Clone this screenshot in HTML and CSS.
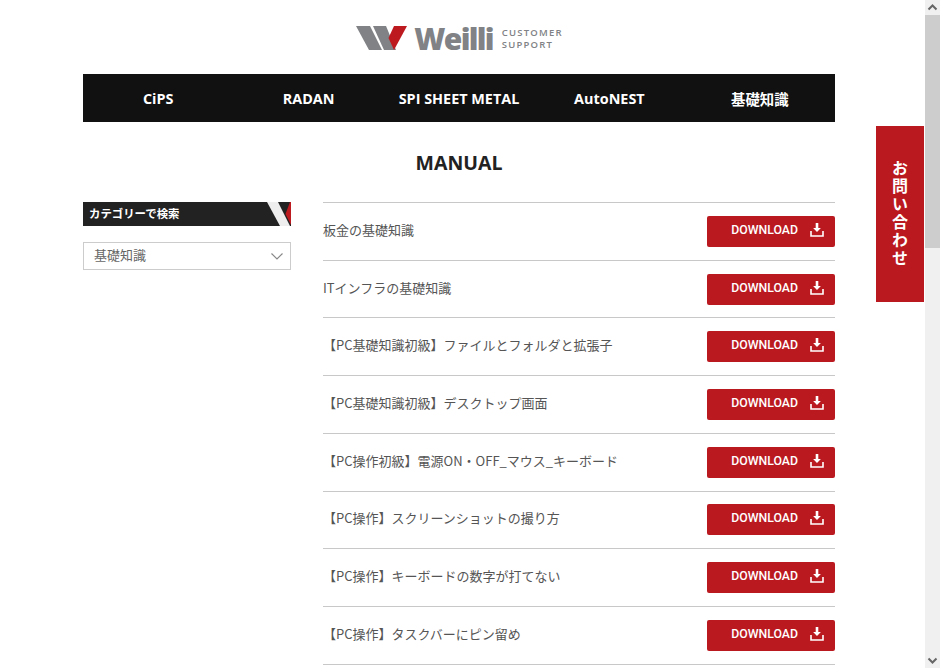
FILE: index.html
```html
<!DOCTYPE html>
<html lang="ja">
<head>
  <meta charset="UTF-8" />
  <title>Weilli Customer Support - Manual</title>
  <link rel="stylesheet" href="styles.css">
</head>
<body>
  <div class="window">
    <div class="page">
      <header class="site-header">
        <a class="logo" href="#">
          <svg class="logo-mark" width="52" height="25" viewBox="0 0 52 25">
            <polygon points="0,0 14,0 26,24 13,24" fill="#808285" />
            <polygon points="17,0 30,0 40,24 28,24" fill="#808285" />
            <polygon points="38,0 51,0 38,24 32.500,12" fill="#bd1a20" />
          </svg>
          <span class="logo-name">Weilli</span>
          <span class="logo-sub">CUSTOMER<br>SUPPORT</span>
        </a>
      </header>

      <nav class="global-nav">
        <a href="#">CiPS</a>
        <a href="#">RADAN</a>
        <a href="#">SPI SHEET METAL</a>
        <a href="#">AutoNEST</a>
        <a href="#">基礎知識</a>
      </nav>

      <h1 class="page-title">MANUAL</h1>

      <div class="content">
        <aside class="sidebar">
          <div class="side-head">
            <span>カテゴリーで検索</span>
            <svg class="side-head-deco" width="24" height="24" viewBox="0 0 24 24">
              <polygon points="0,0 11,0 23,24 13,24" fill="#eeeeee" />
              <polygon points="23,0 24,0 24,23 18.500,12" fill="#bd1a20" />
            </svg>
          </div>
          <div class="side-select">
            <span>基礎知識</span>
            <svg width="12" height="7" viewBox="0 0 12 7">
              <polyline points="0.5,0.5 6,6 11.5,0.5" fill="none" stroke="#888" stroke-width="1.2" />
            </svg>
          </div>
        </aside>

        <main class="manual-list">
          <div class="manual-row">
            <span>板金の基礎知識</span>
            <a class="dl-btn" href="#">DOWNLOAD<svg class="dl-icon" width="14" height="14" viewBox="0 0 14 14"><path d="M5.700 0h2.600v5h2.600L7 9 3.100 5h2.600z" fill="#fff" /><path d="M1 8v5h12V8" fill="none" stroke="#fff" stroke-width="1.600" /></svg></a>
          </div>
          <div class="manual-row">
            <span>ITインフラの基礎知識</span>
            <a class="dl-btn" href="#">DOWNLOAD<svg class="dl-icon" width="14" height="14" viewBox="0 0 14 14"><path d="M5.700 0h2.600v5h2.600L7 9 3.100 5h2.600z" fill="#fff" /><path d="M1 8v5h12V8" fill="none" stroke="#fff" stroke-width="1.600" /></svg></a>
          </div>
          <div class="manual-row">
            <span>【PC基礎知識初級】ファイルとフォルダと拡張子</span>
            <a class="dl-btn" href="#">DOWNLOAD<svg class="dl-icon" width="14" height="14" viewBox="0 0 14 14"><path d="M5.700 0h2.600v5h2.600L7 9 3.100 5h2.600z" fill="#fff" /><path d="M1 8v5h12V8" fill="none" stroke="#fff" stroke-width="1.600" /></svg></a>
          </div>
          <div class="manual-row">
            <span>【PC基礎知識初級】デスクトップ画面</span>
            <a class="dl-btn" href="#">DOWNLOAD<svg class="dl-icon" width="14" height="14" viewBox="0 0 14 14"><path d="M5.700 0h2.600v5h2.600L7 9 3.100 5h2.600z" fill="#fff" /><path d="M1 8v5h12V8" fill="none" stroke="#fff" stroke-width="1.600" /></svg></a>
          </div>
          <div class="manual-row">
            <span>【PC操作初級】電源ON・OFF_マウス_キーボード</span>
            <a class="dl-btn" href="#">DOWNLOAD<svg class="dl-icon" width="14" height="14" viewBox="0 0 14 14"><path d="M5.700 0h2.600v5h2.600L7 9 3.100 5h2.600z" fill="#fff" /><path d="M1 8v5h12V8" fill="none" stroke="#fff" stroke-width="1.600" /></svg></a>
          </div>
          <div class="manual-row">
            <span>【PC操作】スクリーンショットの撮り方</span>
            <a class="dl-btn" href="#">DOWNLOAD<svg class="dl-icon" width="14" height="14" viewBox="0 0 14 14"><path d="M5.700 0h2.600v5h2.600L7 9 3.100 5h2.600z" fill="#fff" /><path d="M1 8v5h12V8" fill="none" stroke="#fff" stroke-width="1.600" /></svg></a>
          </div>
          <div class="manual-row">
            <span>【PC操作】キーボードの数字が打てない</span>
            <a class="dl-btn" href="#">DOWNLOAD<svg class="dl-icon" width="14" height="14" viewBox="0 0 14 14"><path d="M5.700 0h2.600v5h2.600L7 9 3.100 5h2.600z" fill="#fff" /><path d="M1 8v5h12V8" fill="none" stroke="#fff" stroke-width="1.600" /></svg></a>
          </div>
          <div class="manual-row">
            <span>【PC操作】タスクバーにピン留め</span>
            <a class="dl-btn" href="#">DOWNLOAD<svg class="dl-icon" width="14" height="14" viewBox="0 0 14 14"><path d="M5.700 0h2.600v5h2.600L7 9 3.100 5h2.600z" fill="#fff" /><path d="M1 8v5h12V8" fill="none" stroke="#fff" stroke-width="1.600" /></svg></a>
          </div>
        </main>
      </div>

      <a class="contact-tab" href="#">お問い合わせ</a>
    </div>

    <div class="scrollbar">
      <svg class="scroll-arrow" width="15" height="15" viewBox="0 0 15 15">
        <polyline points="3.500,9.500 7.500,5.500 11.500,9.500" fill="none" stroke="#666" stroke-width="2" />
      </svg>
      <div class="scroll-track">
        <div class="scroll-thumb"></div>
      </div>
      <svg class="scroll-arrow" width="15" height="15" viewBox="0 0 15 15">
        <polyline points="3.500,5.500 7.500,9.500 11.500,5.500" fill="none" stroke="#666" stroke-width="2" />
      </svg>
    </div>
  </div>
</body>
</html>
```

FILE: styles.css
```css
html, body {
  margin: 0;
  padding: 0;
  height: 100%;
  overflow: hidden;
}
body {
  background: #fff;
  color: #555;
  font-family: "Noto Sans CJK JP", "Open Sans", sans-serif;
}
a {
  text-decoration: none;
  color: inherit;
}
.window {
  display: flex;
  height: 668px;
}
.page {
  position: relative;
  box-sizing: border-box;
  width: 925px;
  height: 668px;
  padding: 0 90px 0 83px;
  overflow: hidden;
}

/* header */
.site-header {
  display: flex;
  justify-content: center;
  height: 74px;
}
.logo {
  display: flex;
  align-items: center;
  height: 76px;
  padding-left: 1px;
  color: #808285;
}
.logo-mark {
  margin-right: 6px;
}
.logo-name {
  font-family: "Open Sans", sans-serif;
  font-size: 30px;
  font-weight: 800;
  letter-spacing: -1.700px;
  margin-right: 9px;
}
.logo-sub {
  font-family: "Open Sans", sans-serif;
  font-size: 9.500px;
  font-weight: 600;
  line-height: 12px;
  letter-spacing: 1.200px;
  padding-top: 2px;
}

/* nav */
.global-nav {
  display: grid;
  grid-template-columns: repeat(5, 1fr);
  height: 48px;
  background: #111;
}
.global-nav a {
  display: flex;
  align-items: center;
  justify-content: center;
  color: #fff;
  font-family: "Open Sans", "Noto Sans CJK JP", sans-serif;
  font-size: 14.400px;
  font-weight: 700;
}

.page-title {
  height: 80px;
  margin: 0;
  padding-top: 27px;
  box-sizing: border-box;
  text-align: center;
  color: #222;
  font-family: "Open Sans", sans-serif;
  font-size: 19.500px;
  line-height: 28px;
  font-weight: 700;
}

.content {
  display: flex;
  gap: 32px;
}

/* sidebar */
.sidebar {
  width: 208px;
  flex-shrink: 0;
}
.side-head {
  position: relative;
  height: 24px;
  padding-left: 6px;
  background: #222;
  color: #fff;
  font-size: 11.400px;
  font-weight: 700;
  line-height: 22px;
}
.side-head-deco {
  position: absolute;
  top: 0;
  right: 0;
}
.side-select {
  display: flex;
  align-items: center;
  justify-content: space-between;
  box-sizing: border-box;
  height: 28px;
  margin-top: 16px;
  padding: 0 7px 0 10px;
  border: 1px solid #ccc;
  font-size: 13px;
  color: #666;
}
.side-select span {
  margin-top: -4px;
}

/* list */
.manual-list {
  flex: 1;
  border-bottom: 1px solid #c8c8c8;
}
.manual-row {
  display: flex;
  align-items: center;
  justify-content: space-between;
  box-sizing: border-box;
  height: 57.720px;
  border-top: 1px solid #c8c8c8;
  font-size: 13px;
  color: #555;
}
.manual-row span {
  margin-top: -4px;
}
.dl-btn {
  display: flex;
  align-items: center;
  justify-content: flex-end;
  box-sizing: border-box;
  width: 128px;
  height: 31px;
  padding: 0 11px 3px 0;
  background: #bb1920;
  border-radius: 2px;
  color: #fff;
  font-family: "Roboto", sans-serif;
  font-size: 12.300px;
  font-weight: 500;
}
.dl-icon {
  margin-left: 12px;
}

/* contact tab */
.contact-tab {
  position: absolute;
  top: 126px;
  right: 1px;
  width: 48px;
  height: 176px;
  display: flex;
  align-items: center;
  justify-content: center;
  background: #bb1920;
  color: #fff;
  font-size: 16px;
  font-weight: 700;
  letter-spacing: 2px;
  writing-mode: vertical-rl;
}

/* scrollbar */
.scrollbar {
  display: flex;
  flex-direction: column;
  width: 15px;
  height: 668px;
  background: #f0f0f0;
}
.scroll-arrow {
  flex-shrink: 0;
}
.scroll-track {
  flex: 1;
}
.scroll-thumb {
  height: 233px;
  background: #cdcdcd;
}
```
